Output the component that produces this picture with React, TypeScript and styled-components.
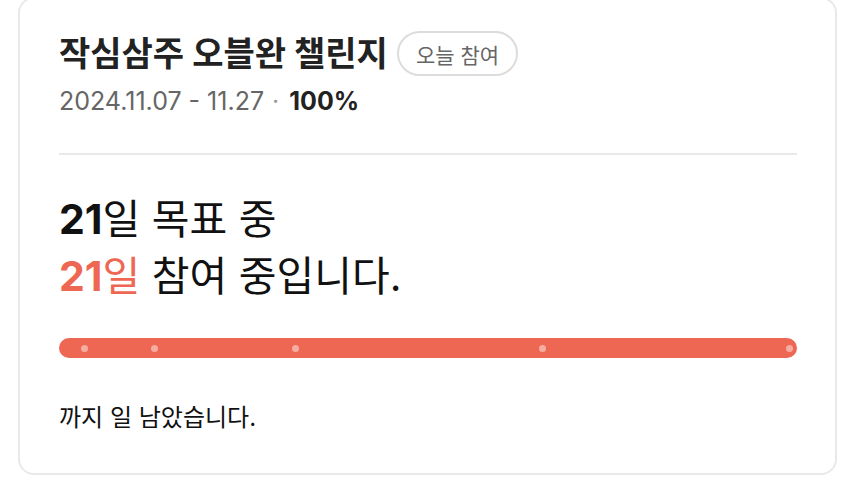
import { createGlobalStyle, styled } from "styled-components";

const COLOR = {
  primary: "#ee6753",
  dot: "#f5ada1",
  darkText: "#222222",
  black: "#111111",
  mediumText: "#666666",
  border: "#e9e9e9",
  badgeBorder: "#dcdcdc",
};

const FONT = `"Inter", "Noto Sans CJK KR", sans-serif`;

const GlobalStyle = createGlobalStyle`
  html, body {
    margin: 0;
    padding: 0;
    background: #ffffff;
    overflow: hidden;
  }
  body {
    font-family: ${FONT};
  }
`;

const Page = styled.div`
  width: 854px;
  height: 482px;
  padding: 0 17px 0 18px;
  box-sizing: border-box;
`;

const Card = styled.section`
  margin-top: -3px;
  border: 2px solid ${COLOR.border};
  border-radius: 16px;
  padding: 32px 38px 40px 39px;
  display: flex;
  flex-direction: column;
  align-items: stretch;
`;

const TitleRow = styled.div`
  display: flex;
  flex-direction: row;
  align-items: center;
  gap: 9px;
`;

const Title = styled.h1`
  margin: 0;
  font-size: 34px;
  font-weight: 700;
  color: ${COLOR.darkText};
  line-height: 45px;
`;

const Badge = styled.span`
  display: inline-flex;
  align-items: center;
  height: 45px;
  box-sizing: border-box;
  padding: 0 17px;
  border: 2px solid ${COLOR.badgeBorder};
  border-radius: 23px;
  font-size: 21px;
  color: ${COLOR.mediumText};
`;

const Period = styled.div`
  margin-top: 10px;
  display: flex;
  flex-direction: row;
  align-items: center;
  font-size: 25px;
  line-height: 31px;
  color: ${COLOR.mediumText};
  .sep {
    margin: 0 10px 0 8px;
    color: #9a9a9a;
  }
  .rate {
    font-weight: 700;
    color: ${COLOR.darkText};
  }
`;

const Divider = styled.hr`
  margin: 36px 0 0;
  border: none;
  height: 2px;
  background: ${COLOR.border};
`;

const Summary = styled.div`
  margin-top: 36px;
  font-size: 41px;
  line-height: 57px;
  color: ${COLOR.black};
  b {
    font-weight: 700;
  }
`;

const Accent = styled.span`
  color: ${COLOR.primary};
`;

const Track = styled.div`
  position: relative;
  margin-top: 33px;
  height: 20px;
  border-radius: 10px;
  background: ${COLOR.primary};
`;

const Dot = styled.span`
  position: absolute;
  top: 6.5px;
  width: 7px;
  height: 7px;
  border-radius: 50%;
  background: ${COLOR.dot};
`;

const Remain = styled.p`
  margin: 44px 0 0;
  font-size: 24px;
  line-height: 31px;
  color: ${COLOR.black};
`;

const TRACK_WIDTH = 740;
const milestones = [1, 3, 7, 14, 21];
const GOAL = 21;

const App = (): JSX.Element => {
  return (
    <Page>
      <GlobalStyle />
      <Card>
        <TitleRow>
          <Title>작심삼주 오블완 챌린지</Title>
          <Badge>오늘 참여</Badge>
        </TitleRow>
        <Period>
          <span>2024.11.07 - 11.27</span>
          <span className="sep">·</span>
          <span className="rate">100%</span>
        </Period>
        <Divider />
        <Summary>
          <div>
            <b>21</b>일 목표 중
          </div>
          <div>
            <Accent>
              <b>21</b>일
            </Accent>{" "}
            참여 중입니다.
          </div>
        </Summary>
        <Track>
          {milestones.map((day) => (
            <Dot key={day} style={{ left: `${(day / GOAL) * TRACK_WIDTH - 13.5}px` }} />
          ))}
        </Track>
        <Remain>까지 일 남았습니다.</Remain>
      </Card>
    </Page>
  );
};

export default App;
